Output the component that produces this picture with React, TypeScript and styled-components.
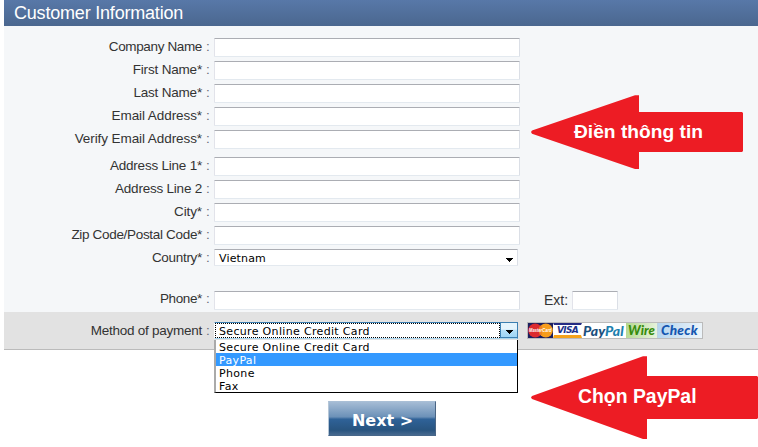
import styled, { createGlobalStyle } from "styled-components"

const fields = [
    { label: "Company Name", spacing: -0.36 },
    { label: "First Name*", spacing: -0.18 },
    { label: "Last Name*", spacing: -0.2 },
    { label: "Email Address*", spacing: -0.08 },
    { label: "Verify Email Address*", spacing: -0.08 },
]

const addressFields = [
    { label: "Address Line 1*", spacing: -0.22 },
    { label: "Address Line 2", spacing: -0.22 },
    { label: "City*", spacing: -0.1 },
    { label: "Zip Code/Postal Code*", spacing: -0.32 },
]

const options = ["Secure Online Credit Card", "PayPal", "Phone", "Fax"]

const Caret = () => (
    <svg width="7" height="4" viewBox="0 0 7 4" shapeRendering="crispEdges">
        <path d="M0 0h7v1H6v1H5v1H4v1H3V3H2V2H1V1H0z" fill="#000" />
    </svg>
)

const MasterCard = () => (
    <svg width="25" height="15" viewBox="0 0 25 15" overflow="visible">
        <rect width="25" height="15" fill="#1b1f5e" />
        <circle cx="7.2" cy="7.5" r="7" fill="#dc2a2e" />
        <circle cx="17.8" cy="7.5" r="7" fill="#f79d1c" />
        <path d="M11 4h3M11 6h3M11 9h3M11 11h3" stroke="#e4682a" />
        <text x="1" y="9.4" fill="#fff" fontFamily="Liberation Sans" fontSize="5" fontWeight="bold" textLength="22.5" lengthAdjust="spacingAndGlyphs">MasterCard</text>
    </svg>
)

const Page = () => (
    <Form>
        <Global />
        <Header>Customer Information</Header>
        <Fields>
            <Group>
                {fields.map((f) => (
                    <Row key={f.label}>
                        <Label $spacing={f.spacing}><span>{f.label}</span><i>:</i></Label>
                        <Input />
                    </Row>
                ))}
            </Group>
            <Group>
                {addressFields.map((f) => (
                    <Row key={f.label}>
                        <Label $spacing={f.spacing}><span>{f.label}</span><i>:</i></Label>
                        <Input />
                    </Row>
                ))}
                <Row>
                    <Label $spacing={-0.3}><span>Country*</span><i>:</i></Label>
                    <Select>Vietnam<Caret /></Select>
                </Row>
            </Group>
            <Row>
                <Label $spacing={-0.38} $line={16}><span>Phone*</span><i>:</i></Label>
                <Input />
                <Ext>Ext:</Ext>
                <Input $width={46} />
            </Row>
        </Fields>
        <Payment>
            <Label $spacing={-0.26}><span>Method of payment</span><i>:</i></Label>
            <OpenSelect>
                <Focus>Secure Online Credit Card</Focus>
                <Drop><Caret /></Drop>
                <Menu>
                    {options.map((o) => (
                        <Option key={o} $active={o === "PayPal"}>{o}</Option>
                    ))}
                </Menu>
            </OpenSelect>
            <Cards>
                <MasterCard />
                <Visa><span>VISA</span></Visa>
                <PayPal><b>Pay</b><span>Pal</span></PayPal>
                <Wire>Wire</Wire>
                <Check>Check</Check>
            </Cards>
        </Payment>
        <Next>Next &gt;</Next>
        <Arrow $top={95} $width={212} $height={74}>
            <svg width="212" height="74" viewBox="0 0 212 74">
                <path d="M0 37 1 35.5 104 .3h4V17h103l1 1v21.5V56l-1 1H108v17h-4L1 38.8z" fill="#ed1c24" />
            </svg>
            <Note $left={43} $top={26} $size={19.2}>Điền thông tin</Note>
        </Arrow>
        <Arrow $top={356} $width={227} $height={83}>
            <svg width="227" height="83" viewBox="0 0 227 83">
                <path d="M0 41.5 1 40 112 .3h4V20h110l1 1v41l-1 1H116v20h-4L1 43z" fill="#ed1c24" />
            </svg>
            <Note $left={47} $top={30} $size={19.4}>Chọn PayPal</Note>
        </Arrow>
    </Form>
)

export default Page

const Global = createGlobalStyle`
    body{
        margin: 0;
        background: #fff;
        font-family: "Liberation Sans", Arial, sans-serif;
    }
    *{
        box-sizing: border-box;
    }
`
const Form = styled.div`
    position: relative;
    width: 758px;
    height: 447px;
    padding-left: 4px;
    overflow: hidden;
`
const Header = styled.div`
    height: 26px;
    padding-left: 10px;
    line-height: 26px;
    font-size: 18px;
    letter-spacing: -0.2px;
    color: #fff;
    background: linear-gradient(#5878a8, #4b678f);
`
const Fields = styled.div`
    height: 286px;
    padding-top: 12px;
    background: #f5f7f9;
`
const Group = styled.div`
    margin-bottom: 4px;
    &:nth-child(2){
        margin-bottom: 19px;
    }
`
const Row = styled.div`
    display: flex;
    height: 23px;
`
const Label = styled.div<{ $spacing: number; $line?: number }>`
    display: flex;
    justify-content: flex-end;
    width: 206px;
    margin-right: 4px;
    font-size: 13.5px;
    line-height: ${(p) => p.$line ?? 18}px;
    letter-spacing: ${(p) => p.$spacing}px;
    color: #333;
    white-space: nowrap;
    i{
        width: 4px;
        margin-left: 4px;
        font-style: normal;
        letter-spacing: 0;
        color: #666d78;
    }
`
const Input = styled.input<{ $width?: number }>`
    width: ${(p) => p.$width ?? 306}px;
    height: 19px;
    padding: 0 4px;
    border: 1px solid;
    border-color: #abadb3 #dbdfe6 #e3e9ef #e2e3ea;
    border-radius: 1px;
    background: #fff;
    outline: none;
`
const Select = styled.div`
    display: flex;
    justify-content: space-between;
    align-items: center;
    width: 304px;
    height: 17px;
    padding: 1px 4px 0;
    border: 1px solid;
    border-color: #abadb3 #dbdfe6 #e3e9ef #e2e3ea;
    border-radius: 1px;
    background: #fff;
    font: 11px "DejaVu Sans", Verdana, sans-serif;
    letter-spacing: 0.15px;
    svg{
        margin-top: 3px;
    }
`
const Ext = styled.div`
    width: 52px;
    padding-left: 24px;
    font-size: 14px;
    line-height: 19px;
    color: #333;
`
const Payment = styled.div`
    display: flex;
    height: 38px;
    padding-top: 10px;
    background: #e2e2e2;
    border-bottom: 1px solid #bbb;
`
const OpenSelect = styled.div`
    position: relative;
    display: flex;
    width: 304px;
    height: 17px;
    border: 1px solid #3c7fb1;
    border-left-color: #fff;
    border-bottom-color: #a9d5ee;
    background: #fff;
    font: 11px/15px "DejaVu Sans", Verdana, sans-serif;
    letter-spacing: 0.33px;
`
const Focus = styled.div`
    flex: 1;
    padding-left: 3px;
    border: 1px dotted #000;
    line-height: 15px;
`
const Drop = styled.div`
    display: flex;
    justify-content: center;
    align-items: flex-end;
    width: 17px;
    padding-bottom: 3px;
    border: 1px solid #3c7fb1;
    border-width: 0 0 1px 1px;
    background: linear-gradient(#e5f4fc 45%, #b6e0f8 50%, #9ed5f5);
`
const Menu = styled.div`
    position: absolute;
    top: 17px;
    left: -1px;
    width: 304px;
    height: 53px;
    border: 1px solid #000;
    border-top: 0;
    border-left: 2px solid #aaa;
    background: #fff;
    z-index: 1;
`
const Option = styled.div<{ $active: boolean }>`
    height: 13px;
    padding: 1px 0 0 3px;
    line-height: 13px;
    color: ${(p) => (p.$active ? "#fff" : "#000")};
    background: ${(p) => (p.$active ? "#3399ff" : "transparent")};
`
const Cards = styled.div`
    display: flex;
    width: 176px;
    height: 17px;
    margin-left: 9px;
    border: 1px solid #bbb;
    background: #fff;
    font: italic 900 13px/15px Lato, "Open Sans", sans-serif;
    white-space: nowrap;
    svg{
        flex: none;
    }
`
const Visa = styled.div`
    width: 29px;
    border: 1px solid #fff;
    border-top: 2px solid #252c83;
    border-bottom: 3px solid #f5a31a;
    text-align: center;
    font: italic bold 9px/10px "DejaVu Sans", sans-serif;
    letter-spacing: -0.7px;
    color: #20328a;
`
const PayPal = styled.div`
    width: 44px;
    padding-left: 1px;
    font-size: 14px;
    color: #1d7fae;
    b{
        font-weight: 900;
        color: #1b4f7d;
    }
`
const Wire = styled.div`
    width: 31px;
    padding-left: 2px;
    color: #378c0c;
    background: linear-gradient(100deg, #b4d88f, #e7f2dd 95%);
`
const Check = styled.div`
    flex: 1;
    padding-left: 3px;
    border-left: 1px solid #bcd3e2;
    font-size: 13.5px;
    letter-spacing: 0.3px;
    color: #1456b0;
    background: linear-gradient(100deg, #b4d4ee, #eef5fa);
`
const Next = styled.button`
    display: block;
    width: 108px;
    height: 35px;
    margin: 51px 0 0 324px;
    padding: 3px 0 0 1px;
    border: 1px solid;
    border-color: #a9bfd6 #4a6584 #47678a #b5c6d7;
    background: linear-gradient(#a5bcd5, #6c91b8 45%, #2f6298 52%, #28547f 85%, #47698f);
    color: #fff;
    font: bold 16px "DejaVu Sans", Verdana, sans-serif;
`
/* callouts lie over the form */
const Arrow = styled.div<{ $top: number; $width: number; $height: number }>`
    position: absolute;
    top: ${(p) => p.$top}px;
    left: 531px;
    width: ${(p) => p.$width}px;
    height: ${(p) => p.$height}px;
    svg{
        display: block;
    }
`
const Note = styled.div<{ $left: number; $top: number; $size: number }>`
    position: absolute;
    left: ${(p) => p.$left}px;
    top: ${(p) => p.$top}px;
    font-size: ${(p) => p.$size}px;
    line-height: 21px;
    font-weight: bold;
    color: #fff;
    white-space: nowrap;
`
